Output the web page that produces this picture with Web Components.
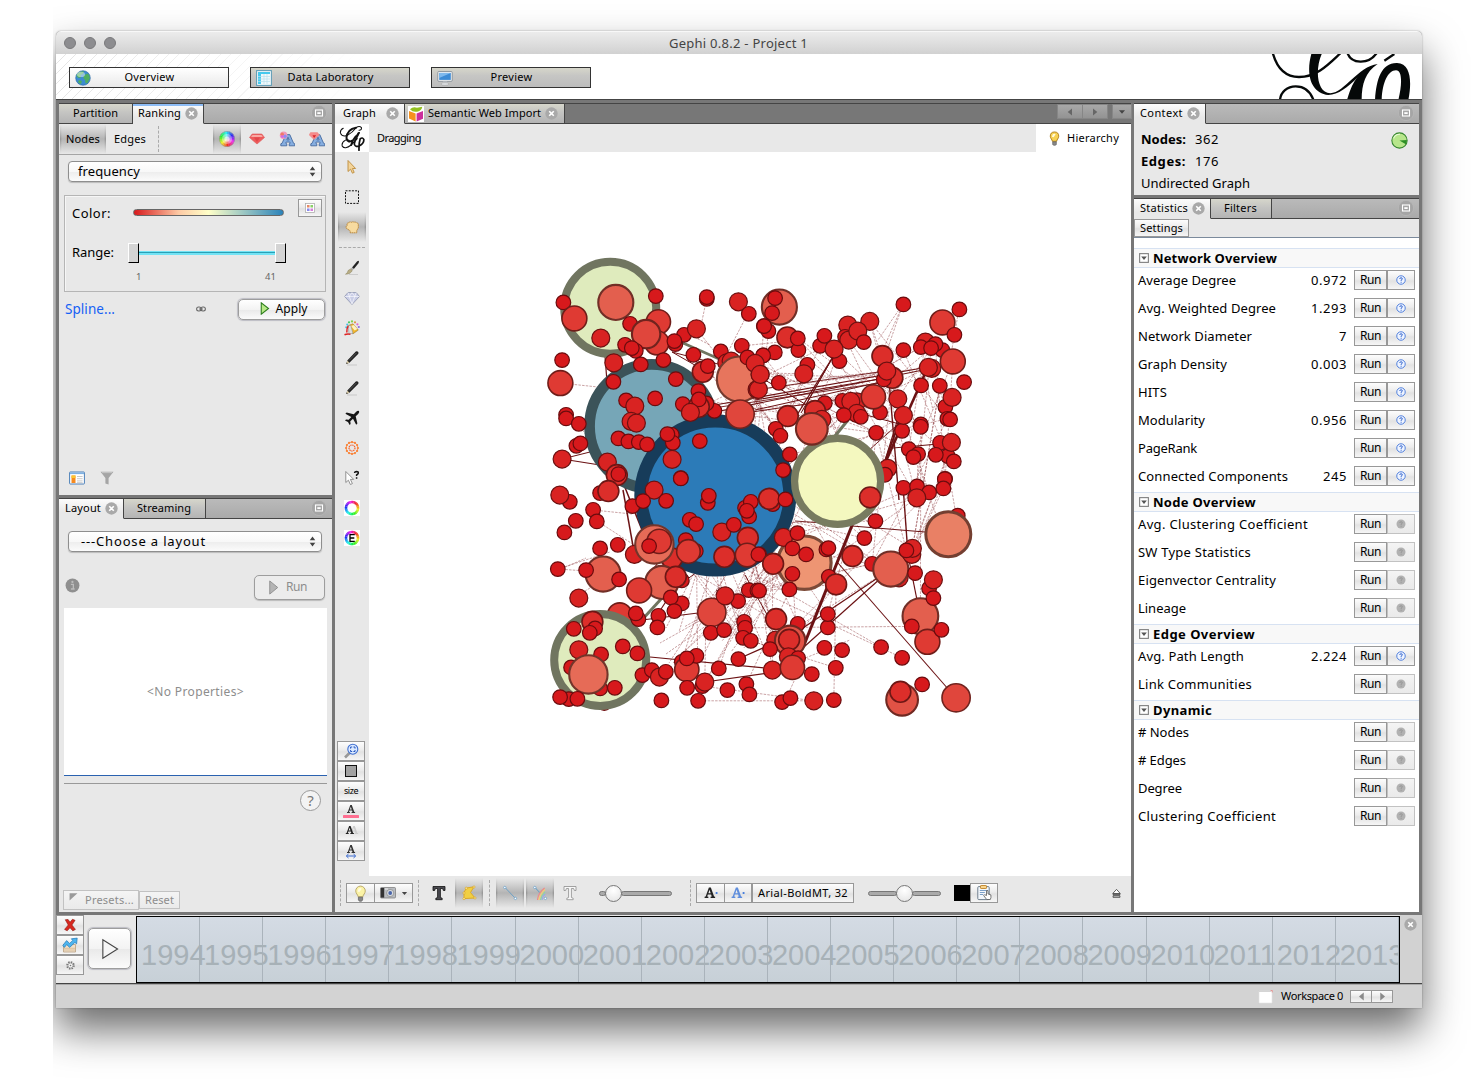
<!DOCTYPE html>
<html lang="en">
<head>
<meta charset="utf-8">
<title>Gephi 0.8.2 - Project 1</title>
<style>
body{margin:0;background:#fff;font-family:"Noto Sans","Open Sans",sans-serif;font-size:11px;color:#000;overflow:hidden}
</style>
</head>
<body>
<gephi-app></gephi-app>
<script>
const define=(name,css,html,setup)=>{
  customElements.define(name,class extends HTMLElement{
    connectedCallback(){
      if(this.shadowRoot)return;
      const root=this.attachShadow({mode:"open"});
      const t=document.createElement("template");
      t.innerHTML=`<style>*{box-sizing:border-box}:host{box-sizing:border-box}${css}</style>`+(typeof html==="function"?html(this):html);
      root.appendChild(t.content.cloneNode(true));
      if(setup)setup(this,root);
    }
  });
};

/* ---------- icons (16 x 16 grid) ---------- */
const wheel=(r,w)=>{let s="";for(let i=0;i<24;i++){const a=i*15*Math.PI/180,b=(i+1.1)*15*Math.PI/180;
  s+=`<path d="M${8+r*Math.cos(a)} ${8+r*Math.sin(a)}A${r} ${r} 0 0 1 ${8+r*Math.cos(b)} ${8+r*Math.sin(b)}" fill="none" stroke="hsl(${(i*15+285)%360},88%,56%)" stroke-width="${w}"/>`}return s};
const wheelCW=(r,w)=>{let s="";for(let i=0;i<24;i++){const a=i*15*Math.PI/180,b=(i+1.1)*15*Math.PI/180;
  s+=`<path d="M${8+r*Math.cos(a)} ${8+r*Math.sin(a)}A${r} ${r} 0 0 1 ${8+r*Math.cos(b)} ${8+r*Math.sin(b)}" fill="none" stroke="hsl(${(i*15+55)%360},88%,54%)" stroke-width="${w}"/>`}return s};
const dots=(()=>{let s="";for(let i=0;i<12;i++){const a=i*Math.PI/6;s+=`<circle cx="${8+5.9*Math.cos(a)}" cy="${8+5.9*Math.sin(a)}" r="1.1"/>`}return s})();
const letterT=(f,s)=>`<path d="M2 1.5h12v4h-1.6l-.8-2H9.4v9l1.8.8v1.4H4.8v-1.4l1.8-.8v-9H4.4l-.8 2H2z" fill="${f}" stroke="${s}" stroke-width=".8"/>`;
const letterA=(f,s,x=0)=>`<path transform="translate(${x} 0)" d="M1.2 14.8v-2l1.2-.5L6.4 3.600h3.800l3.800 8.700 1.200.5v2H9.600v-2l1-.5-.4-1.200H6.600l-.4 1.200 1 .5v2zM7.300 8.900h2.200L8.400 6.200z" fill="${f}" stroke="${s}" stroke-width=".8"/>`;
const smallA=(f,y=0)=>`<path transform="translate(0 ${y})" d="M4 11v-.9l.8-.2L7.300 3h1.500l2.500 6.900.8.2v.9H8.600v-.9l.9-.2-.5-1.500H6.500L6 9.900l.9.2v.9zM6.900 7.400h1.800L7.800 4.700z" fill="${f}"/>`;
const pencil=`<path d="M3 15h10" stroke="#c8c8c8"/><path d="M2.3 14l1-3.6L11.8 1.6q1.5-.8 2.4.4.8 1-.1 2L5.4 12.8z" fill="#222"/><path d="M2.3 14l1-3.6 2.1 2.3z" fill="#d8c9a4"/><path d="M2.3 14l.5-1.6.9.9z" fill="#222"/><path d="M5 10.5l7.5-7.6" stroke="#777" stroke-width=".6"/>`;
const bulb=`<path d="M8 1a4.6 4.6 0 0 0-4.5 4.6c0 2.4 2 3.3 2.2 5.4h4.6c.2-2.1 2.2-3 2.2-5.4A4.6 4.6 0 0 0 8 1z" fill="var(--bulb,#f7d154)" stroke="var(--bulbline,#a6730c)" stroke-width=".9"/><path d="M6.2 3.4q1.8-1 3 .1L7 6.6 5.2 6z" fill="#fffbe0"/><path d="M6 11.5h4v2.6l-1 1.2H7l-1-1.2z" fill="#888" stroke="#444" stroke-width=".5"/>`;
const ICONS={
 close:`<circle cx="8" cy="8" r="7.6" fill="#a9a9a9"/><path d="M5.2 5.2l5.6 5.6M10.8 5.2l-5.6 5.6" stroke="#fff" stroke-width="2"/>`,
 min:`<circle cx="8" cy="8" r="7.6" fill="#a5a5a5" stroke="#b9b9b9" stroke-width=".7"/><rect x="4.5" y="5" width="7" height="6" fill="none" stroke="#fff" stroke-width="1.1"/><rect x="6.3" y="7.2" width="3.4" height="1.800" fill="#fff"/>`,
 globe:`<circle cx="8" cy="8" r="7.3" fill="#3c8bd0" stroke="#2566a5" stroke-width=".6"/><path d="M2 4q3-3.5 7-2.6L8 4 5.5 5 6 7.5 3.4 8 1.5 6zM9 5l4-1.5q2 2 1.8 5L12.5 13l-2 .5-.5-3.5L8.3 8zM4 10l3 1-1 3q-2-.6-3-2z" fill="#4fae62"/><ellipse cx="6" cy="4.400" rx="4" ry="2.600" fill="#fff" opacity=".45"/>`,
 table:`<rect x=".6" y=".6" width="14.8" height="14.8" fill="#eef8fb" stroke="#5c9bb4"/><path d="M2 2h12v2H2zM2 4h3v10H2z" fill="#45c9ee"/><path d="M5 6.5h9M5 9h9M5 11.5h9M8 4v10M11 4v10M2 6.5h3M2 9h3M2 11.5h3" stroke="#b7dfec" stroke-width=".7"/>`,
 monitor:`<rect x=".8" y="1.5" width="14.4" height="9.8" rx="1" fill="#f1f3f4" stroke="#7d8890" stroke-width=".8"/><rect x="2.2" y="2.9" width="11.6" height="7" fill="#3d8bd5"/><path d="M2.2 2.9h11.6L2.2 8z" fill="#7fb9ed"/><path d="M6 11.5h4l1 2.5H5z" fill="#c7ccd0"/><ellipse cx="8" cy="14" rx="4" ry="1.2" fill="#e5e7e9" stroke="#888" stroke-width=".4"/>`,
 wheel:`${wheel(4,7.600)}<circle cx="8" cy="8" r="5" fill="#fff" opacity=".4"/><circle cx="8" cy="8" r="2.6" fill="#fff" opacity=".6"/><circle cx="8" cy="8" r="7.6" fill="none" stroke="#999" stroke-width=".6"/>`,
 ruby:`<path d="M3.2 3h9.6L15.5 6.5 8 13 .5 6.5z" fill="#ee5b5b" stroke="#d66" stroke-width=".7"/><path d="M3.5 4h9l1.3 2H2z" fill="#f9a9a3"/><path d="M5 6.500h6L8 11z" fill="#e2474a"/>`,
 colorA:`${letterA("#86aee0","#3a5f98",.6)}<circle cx="4.600" cy="4.200" r="3.800" fill="#f29ab9"/><circle cx="3.2" cy="3.2" r="1.7" fill="#ef7b66"/><circle cx="6" cy="5.2" r="1.7" fill="#8d8cf4"/><circle cx="3.2" cy="5.6" r="1.4" fill="#d568e5"/>`,
 sizeA:`${letterA("#86aee0","#3a5f98",.6)}<path d="M1.5 1.500h7L10.400 4 5 8.600.2 4z" fill="#f58a8a" stroke="#e88" stroke-width=".5"/><path d="M3.5 4.200h3.600L5.100 7z" fill="#d92127"/>`,
 swatches:`<rect x="2" y="2" width="12" height="12" fill="#fff" stroke="#aaa"/><path d="M4 4h3.4v3.4H4z" fill="#e58a65"/><path d="M8.6 4H12v3.4H8.6z" fill="#8bd06a"/><path d="M4 8.6h3.4V12H4z" fill="#8a89ef"/><path d="M8.6 8.6H12V12H8.6z" fill="#d57edb"/>`,
 chain:`<g fill="none" stroke="#666" stroke-width="1.7"><rect x="1" y="4.8" width="7.2" height="6.4" rx="3.200"/><rect x="7.800" y="4.800" width="7.200" height="6.400" rx="3.200"/><path d="M5 8h6"/></g>`,
 play:`<path d="M4 1v14L13 8z" fill="#b8e986" stroke="#2c7d1c" stroke-width="1.300"/>`,
 playOff:`<path d="M4 1v14L12.500 8z" fill="#b4b4b4" stroke="#8f8f8f" stroke-width="1"/>`,
 list:`<rect x=".6" y="2" width="14.8" height="12" rx=".6" fill="#fff" stroke="#4b7fb8"/><path d="M1 2.5h14v1.6H1z" fill="#7eb1e2"/><path d="M2.500 5.500h4v7.500h-4z" fill="#f68a1f"/><path d="M2.500 5.500h4v2.500h-4z" fill="#fbc62f"/><path d="M8 6.5h5.6M8 8.7h5.6M8 10.9h5.6M8 12.7h5.6" stroke="#bbb" stroke-width=".8"/>`,
 funnel:`<path d="M1.5 1.8h13L9.6 8v6.5l-3.2-1V8z" fill="#a5a5a5"/><path d="M3 2.6h10" stroke="#c5c5c5"/>`,
 info:`<circle cx="8" cy="8" r="7.4" fill="#8f8f8f"/><path d="M6.3 6.8h2.6v4.7h1M6.3 11.7h4" stroke="#bdbdbd" stroke-width="1.4" fill="none"/><circle cx="7.9" cy="4.2" r="1.2" fill="#bdbdbd"/>`,
 tri:`<path d="M1 2h14L1 15z" fill="#9a9a9a"/>`,
 cube:`<rect width="16" height="16" fill="#fff"/><path d="M1 5l6.6 2.6v8L1 12.6z" fill="#f5911e"/><path d="M8.6 7.6L15 5v7.8l-6.4 2.8z" fill="#cc2e9d"/><path d="M2 3.2q3-2.8 7-1.4l5.3-1q-.6 3.6-4.3 4.6Q5 6.7 2 3.2z" fill="#93c020"/>`,
 arrow:`<path d="M4 1.500v11l2.600-2.300 1.800 4 1.800-.8-1.800-3.900h3.200z" fill="#f3d49a" stroke="#bd8c3c" stroke-width=".9"/>`,
 marquee:`<rect x="1.5" y="1.8" width="13" height="12.6" fill="none" stroke="#111" stroke-width="1" stroke-dasharray="2 1.2"/>`,
 hand:`<path d="M3.200 6.500Q2.500 3.800 4.800 3.700 6 2.300 7.300 3.300 8.800 2.300 10 3.300 11.800 2.400 12.500 4 14.600 3.700 14.300 6v2.800l-1.500 2.800v2.200H6.200v-1.900L2.300 9.200Q1.600 7.300 3.200 6.500z" fill="#f7dba0" stroke="#b98332" stroke-width=".9" stroke-dasharray="1.600 .5"/>`,
 brush:`<path d="M5 14.5h9" stroke="#ccc"/><path d="M15 .8l-1.8.4L8 7.5l1.8 1.6L14.7 3z" fill="#222"/><path d="M8 7.5l1.8 1.6-1.6 1.4-1.7-1.5z" fill="#aaa"/><path d="M6.5 9l1.7 1.5Q7 14 1.5 14.2 4.3 12.5 4 10.6z" fill="#b9ae85" stroke="#8b835f" stroke-width=".5"/>`,
 diamond:`<path d="M4 2.5h8.2L15.5 6.5 8 14.5.6 6.5z" fill="#c9cde6" stroke="#8f95b0" stroke-width=".8"/><path d="M.8 6.5h14.6M4 2.5l1.3 4L8 14l2.8-7.5 1.4-4M5.3 6.5L8 2.6l2.8 3.9" fill="none" stroke="#fff" stroke-width=".6"/>`,
 bucket:`<g fill="#44c1e8"><circle cx="2.2" cy="7.3" r="1"/><circle cx="3.2" cy="4.6" r="1"/></g><circle cx="5" cy="2.3" r="1.1" fill="#46c860"/><circle cx="8" cy="1.4" r="1.1" fill="#7fd44f"/><circle cx="11" cy="2.3" r="1.1" fill="#e2953d"/><circle cx="13.4" cy="4.3" r="1.1" fill="#e267cd"/><circle cx="14.8" cy="7" r="1.1" fill="#8669e3"/><path d="M4 5.5l5-1.7 5.3 6.3-5.5 3.8z" fill="#f1b62d" stroke="#8f6a20" stroke-width=".5"/><path d="M7 6l3-1 3.3 4-2.6 1.500z" fill="#fff1c0"/><path d="M4 5.500h2.800L9 13.500H5z" fill="#ddd" stroke="#888" stroke-width=".5"/><path d="M4.200 6Q2.600 8 2.800 12.500M.5 14.800q3-1.400 6-.4" stroke="#d22" stroke-width="1.500" fill="none"/>`,
 pencil,
 plane:`<path d="M15 1q-1.3-.7-2.8.8L9.8 4.3 2.6 2.6 1.4 3.8 7.3 7 4.7 9.8 2 9.4 1 10.4l3 1.5L5.6 15l1-1-.3-2.7L9 8.7l3.2 6 1.2-1.2-1.7-7.2 2.5-2.4Q15.8 2.3 15 1z" fill="#151515"/>`,
 sun:`<g fill="#f98338">${dots}</g><circle cx="8" cy="8" r="3" fill="none" stroke="#f5602b" stroke-width="1.2" stroke-dasharray="1.4 .6"/><circle cx="8" cy="8" r="5.9" fill="none" stroke="#f98338" stroke-width=".8"/>`,
 helpCursor:`<path d="M1.8 1.5v11l2.6-2.3 2 4.3 2-.9-2-4.2h3.3z" fill="#fff" stroke="#888" stroke-width=".9"/><path d="M10.5 3q.2-1.6 2-1.6 2 .1 1.8 1.8-.1 1-1.7 1.8v1M12.6 7.2v1.5" fill="none" stroke="#111" stroke-width="1.5"/>`,
 ring:`<rect width="16" height="16" fill="#fff"/>${wheelCW(6,2.6)}`,
 ringE:`<rect width="16" height="16" fill="#fff"/>${wheelCW(6,2.6)}<path d="M10.800 4.700H6v6.600h4.800M6 8h4.300" fill="none" stroke="#000" stroke-width="1.300"/>`,
 mag:`<path d="M7 9.5L2 14.5" stroke="#999" stroke-width="2.6"/><circle cx="9.8" cy="6.2" r="5" fill="#dceaff" stroke="#3f6fd1" stroke-width="1.1"/><path d="M7.6 5.6V4h1.6M10.4 4H12v1.6M12 7v1.5h-1.6M9.2 8.5H7.6V7" fill="none" stroke="#2456c0" stroke-width="1"/>`,
 square:`<rect x="2.500" y="2.500" width="11" height="11" fill="#a2a2a2" stroke="#111"/>`,
 Apink:`${smallA("#333",-1)}<rect y="12" width="16" height="3" rx=".6" fill="#ff6f91"/>`,
 Ashade:`<g transform="translate(3 0)">${smallA("#ccc")}</g><g transform="translate(-1.2 0)">${smallA("#222")}</g>`,
 Awidth:`${smallA("#333",-1)}<path d="M3.6 13h8.8M5.5 11l-2.2 2 2.2 2M10.5 11l2.2 2-2.2 2" fill="none" stroke="#3a6bd0" stroke-width="1"/>`,
 bulb,
 camera:`<rect x=".5" y="2.5" width="15" height="10.5" rx="1" fill="#b9bcc0" stroke="#777" stroke-width=".7"/><rect x=".8" y="3" width="3.4" height="9.6" fill="#333"/><circle cx="10.2" cy="8" r="3.6" fill="#d9dde0" stroke="#777" stroke-width=".6"/><circle cx="10.2" cy="8" r="1.9" fill="#4964a8"/><path d="M5 4h3" stroke="#eee"/>`,
 down:`<path d="M2 4.500h12l-6 7z" fill="#444"/>`,
 left:`<path d="M12 1v14L3.500 8z" fill="currentColor"/>`,
 right:`<path d="M4 1v14l8.500-7z" fill="currentColor"/>`,
 T:letterT("#4a4a50","#111"),
 Tout:letterT("#f8f8f8","#8d8d8d"),
 hull:`<path d="M3 7.500L5.400 3 13 1.800 9.500 7.500 14 13 3 13.600z" fill="#f1cf43" stroke="#dcaa2a"/><g fill="#fff3a8" stroke="#d39e21" stroke-width=".6"><circle cx="5.2" cy="3.2" r="1.1"/><circle cx="13" cy="2" r="1.1"/><circle cx="3" cy="8" r="1.1"/><circle cx="3" cy="13.6" r="1.1"/><circle cx="14" cy="13" r="1.1"/></g>`,
 edge:`<path d="M3 2.500L13.500 13.500" stroke="#6da1c5" stroke-width="1"/><circle cx="2.8" cy="2.5" r="1.2" fill="#fff" stroke="#5c98c5" stroke-width=".7"/><circle cx="13.4" cy="13.4" r="1.2" fill="#fff" stroke="#5c98c5" stroke-width=".7"/>`,
 rainbow:`<path d="M3 2.5L8 8" stroke="#6da1c5" stroke-width="1.1"/><circle cx="2.8" cy="2.5" r="1.2" fill="#fff" stroke="#5c98c5" stroke-width=".7"/><g fill="none" stroke-width="1.3"><path d="M5.5 15Q6 8 12.6 3" stroke="#ee8a8a"/><path d="M7 15Q8 9 13 4.6" stroke="#f2cf72"/><path d="M8.5 15Q9.5 10 13 7" stroke="#91d4a0"/><path d="M10 15q.6-4 3-6" stroke="#9aa8ea"/></g><circle cx="13.4" cy="13.4" r="1.2" fill="#fff" stroke="#5c98c5" stroke-width=".7"/>`,
 Adot:`<g transform="translate(-3.600 -1.300) scale(1.300)">${smallA("#222")}</g><circle cx="13.600" cy="8" r="1.100" fill="#3d78dc"/>`,
 Ablue:`<g transform="translate(-3.600 -1.300) scale(1.300)">${smallA("#5f8edd")}</g><circle cx="13.600" cy="8" r="1.100" fill="#3d78dc"/>`,
 clip:`<rect x="1.8" y="1.6" width="11.4" height="13" rx="1" fill="#f4f8fc" stroke="#6e7e8d"/><rect x="4.5" y=".5" width="6" height="3" rx=".6" fill="#f8d48d" stroke="#c08327" stroke-width=".9"/><path d="M3.8 5.5h7M3.8 7.5h5M3.8 9.5h3.5" stroke="#7da0c8"/><path d="M10.5 5.5v5l-2-.8-.8.9 3 3.9h3.6q1-1.5.6-4.6l-2.9-1V5.6z" fill="#fff" stroke="#555" stroke-width=".8"/>`,
 eject:`<path d="M8 2L2.5 8h11zM3 9.2h10v1.2H3zM3 11.6h10v2H3z" fill="#fff" stroke="#333" stroke-width="1.1"/>`,
 redx:`<path d="M2.6 2l3.2-.3L8 4.9l2.8-3.4 3 1.2L10.2 8l4 5-3 1.7L8 11l-3.2 3.6-3-1.6L6 8z" fill="#d8281f" stroke="#8e1710" stroke-width=".7"/>`,
 chart:`<path d="M1.5 7.5h12V15h-12z" fill="#f0dfc8" stroke="#b99f80" stroke-width=".8"/><path d="M2 11.3h11M2 13h11" stroke="#d5b992" stroke-width=".8"/><path d="M.8 8.4L4.6 3.6 7.6 6.4l3.2-3L9.3 1.8l5.9-.7-.6 5.8-1.7-1.5-5.2 5-3-2.8-2.3 2.8z" fill="#4db5ef" stroke="#2477b5" stroke-width=".7"/>`,
 gear:`<circle cx="8" cy="8" r="5" fill="none" stroke="#777" stroke-width="2.4" stroke-dasharray="2.2 1.7"/><circle cx="8" cy="8" r="3.6" fill="#f4f4f4" stroke="#888"/><circle cx="8" cy="8" r="1.2" fill="#777"/>`,
 bigplay:`<path d="M2.800 1.300v13.400L13.500 8z" fill="#f6f6f6" stroke="#444" stroke-width=".8"/>`,
 help:`<circle cx="8" cy="8" r="6.8" fill="#eef4ff" stroke="#4a7bdc" stroke-width="1.5"/><path d="M5.9 6.4q.2-2 2.2-2 2.2.1 2 1.9-.2 1.2-1.9 1.9v1.2M8.2 10.8v1.6" fill="none" stroke="#3465cf" stroke-width="1.6"/>`,
 helpOff:`<circle cx="8" cy="8" r="7.2" fill="#b1b1b1"/><path d="M5.9 6.4q.2-2 2.2-2 2.2.1 2 1.9-.2 1.2-1.9 1.9v1.2M8.2 10.8v1.6" fill="none" stroke="#929292" stroke-width="1.4"/>`,
 twisty:`<rect x="1" y="1" width="14" height="14" fill="#fff" stroke="#808080" stroke-width="1.8"/><path d="M3.500 5.500h9L8 11z" fill="#555"/>`,
 pie:`<circle cx="8" cy="8" r="7.2" fill="#b7e68b" stroke="#36862f"/><path d="M8 8l6.9-.4a7 7 0 0 1-1 4z" fill="#2c8f26"/><path d="M2.5 6Q4 2 8.5 2.2" stroke="#e9fbd7" fill="none"/>`,
 page:`<path d="M1 2h14v13H1z" fill="#fff" stroke="#ddd" stroke-width=".6"/><path d="M1 2.5h13" stroke="#ccc"/><path d="M13.5 1.6h1.7v2" fill="none" stroke="#e59090"/>`,
 spin:`<path d="M8 .8l4 5.400H4zM8 15.200L4 9.800h8z" fill="#444"/>`,
 logo:`<g fill="none" stroke="#111" stroke-linecap="round"><path stroke-width=".65" d="M2.600 2Q.6 3 .9 5 2 7.500 5 6.500 8.500 4.500 10.500 1.700 12.500.2 13.800 1.600 14 3.300 12.300 3.200M6.800 10.300Q6 8.600 4 9.300 1.400 10.700 2 13 3.600 15.300 7.500 12.300 10.500 9.500 12.600 4.600"/><path stroke-width="1.200" d="M10.500 1.700Q5 2.600 4.600 8 5.200 11.400 8.500 9.400 10.500 8 12 5M10.300 7Q8.200 9.300 7.500 12.300"/><path stroke-width="1.050" d="M11 8.300Q9.200 9.800 9.500 12 10.300 13.900 12.600 12.800 15.300 11.300 15.300 9 14.500 7.200 13 8.600 12.200 11 12.300 15.600"/></g>`
};
define("g-icon",`:host{display:inline-block;flex:none;line-height:0}svg{display:block}`,
 h=>{const s=h.getAttribute("s")||16;return `<svg width="${s}" height="${s}" viewBox="0 0 16 16">${ICONS[h.getAttribute("n")]}</svg>`});

/* text run tracked to a given advance width */
define("t-x",`:host{display:inline-block;white-space:pre;flex:none}:host([up]){padding-bottom:2px}`,`<slot></slot>`,h=>{
  const w=+h.getAttribute("w"),n=h.textContent.length;
  if(w&&n){const cur=h.getBoundingClientRect().width;h.style.letterSpacing=((w-cur)/n)+"px"}
});

define("push-button",`:host{display:flex;align-items:center;justify-content:center;flex:none;border:1px solid #989898;background:linear-gradient(#fdfdfd,#ececec 45%,#e2e2e2 55%,#f6f6f6)}
:host([off]){border-color:#c2c2c2;color:#8d8d8d;background:linear-gradient(#f4f4f4,#eaeaea)}
:host([round]){border-radius:5px;border-color:#9d9d9d;background:linear-gradient(#fff,#f3f3f3 50%,#e9e9e9 51%,#fbfbfb);box-shadow:0 0 1px 1px #bcbcc4}
:host([round][off]){background:#ececec;box-shadow:0 1px 1px #bbb}`,`<slot></slot>`);

define("combo-box",`:host{display:flex;align-items:center;justify-content:space-between;height:21px;padding:0 3px 0 9px;font-size:13px;border:1px solid #8e8e8e;border-radius:4px;background:linear-gradient(#fff,#f8f8f8 50%,#ededed 52%,#fbfbfb);box-shadow:0 1px 1px #bbb}`,
 `<slot></slot><g-icon n="spin" s="11"></g-icon>`);

define("slider-bar",`:host{display:flex;align-items:center;flex:none;height:20px}
.t{height:5px;border-radius:3px;background:#aaa;border:1px solid #777}
.k{width:17px;height:17px;border-radius:50%;border:1px solid #777;background:radial-gradient(circle at 50% 30%,#fff,#e2e2e2);margin:0 -1px;flex:none}`,
 h=>`<span class="t" style="width:${h.getAttribute("a")}px"></span><span class="k"></span><span class="t" style="flex:1"></span>`);

define("dock-tab",`:host{display:flex;align-items:center;height:20px;flex:none;padding-left:6px;border-right:1px solid #444;border-bottom:1px solid #444;background:linear-gradient(#d6d6cb,#c4c4c2 45%,#b4b4b4);font-size:11px}
:host([on]){background:linear-gradient(#fcfcfc,#e8e8e8 70%);border-bottom-color:#e8e8e8}
:host([hot]){box-shadow:inset 0 2px #8dbcf5}
g-icon{margin:-1px 0 0 4px}`,h=>`<slot></slot>${h.hasAttribute("x")?`<g-icon n="close" s="13"></g-icon>`:""}`);

define("dock-panel",`:host{display:flex;flex-direction:column;background:#e8e8e8}
.bar{display:flex;height:21px;flex:none;border-top:1px solid #444;background:linear-gradient(#bababa,#a9a9a9)}
:host([plain]) .bar{background:#777}
.rest{flex:1;border-bottom:1px solid #444;display:flex;justify-content:flex-end;align-items:center;padding-right:5px}
.rest g-icon{margin-top:-2px}
:host([plain]) .rest{padding-right:0}
.body{flex:1;display:flex;flex-direction:column;min-height:0}`,
 h=>`<div class="bar"><slot name="tab"></slot><div class="rest"><slot name="end"><g-icon n="min" s="16"></g-icon></slot></div></div><div class="body"><slot></slot></div>`);

define("tool-toggle",`:host{display:flex;align-items:center;justify-content:center;flex:none;width:30px;height:30px}
:host([on]){background:linear-gradient(90deg,#e8e8e8 1px,transparent 1px,transparent calc(100% - 1px),#e8e8e8 0),linear-gradient(rgba(232,232,232,1),rgba(232,232,232,0) 50%,rgba(232,232,232,1)),linear-gradient(90deg,#7a7a7a,#b4b4b4 3px,#b4b4b4 calc(100% - 3px),#7a7a7a)}`,`<slot></slot>`);

/* ---------- ranking ---------- */
define("ranking-view",`:host{display:flex;flex-direction:column;flex:1}
.tb{display:flex;height:31px;border-bottom:1px solid #a5a5a5;align-items:center}
.sep{height:26px;border-left:1px dashed #aaa}
combo-box{margin:6px 10px 0 9px}
.box{margin:13px 6px 0 5px;height:97px;border:1px solid #b5b5b5;box-shadow:inset 1px 1px #f6f6f6;padding:3px 3px 0 7px;font-size:13px}
.row{display:flex;align-items:center;height:22px}
.grad{width:151px;height:7px;border:1px solid #666;border-radius:4px;background:linear-gradient(90deg,#d7191c,#fdcaa5 30%,#ffffc8 50%,#abd0c4 70%,#2b83ba);margin-left:22px}
.line{width:136px;height:4px;background:linear-gradient(#72e3f5 25%,#2c9fb5 25%,#2c9fb5 50%,#72e3f5 50%)}
.k{width:11px;height:20px;background:#d4d4d4;border:1px solid #fff;border-right-color:#000;border-bottom-color:#000}
.n{display:flex;justify-content:space-between;color:#666;font-size:9.500px;margin:6px 46px 0 63px;line-height:14px}
.act{display:flex;align-items:center;margin:6px 7px 0 6px;height:22px}
.foot{display:flex;gap:14px;margin:auto 0 9px 10px}`,
`<div class="tb"><tool-toggle on style="width:48px"><t-x up w="34">Nodes</t-x></tool-toggle><t-x up w="32" style="margin:0 12px 0 7px">Edges</t-x><span class="sep"></span><tool-toggle on style="margin-left:53px"><g-icon n="wheel"></g-icon></tool-toggle><tool-toggle><g-icon n="ruby"></g-icon></tool-toggle><tool-toggle><g-icon n="colorA"></g-icon></tool-toggle><tool-toggle><g-icon n="sizeA"></g-icon></tool-toggle></div>
<combo-box><t-x up w="62">frequency</t-x></combo-box>
<div class="box"><div class="row"><t-x w="39" style="margin-top:5px">Color:</t-x><span class="grad" style="margin-top:5px"></span><push-button style="width:24px;height:18px;margin-left:14px;align-self:flex-start"><g-icon n="swatches" s="12"></g-icon></push-button></div>
<div class="row" style="margin-top:21px"><t-x up w="42">Range:</t-x><span class="k" style="margin:0 0 0 14px"></span><span class="line"></span><span class="k"></span></div>
<div class="n"><span style="margin-left:1px">1</span><t-x w="11">41</t-x></div></div>
<div class="act"><t-x w="50" style="color:#1560f5;font-size:13.500px">Spline...</t-x><g-icon n="chain" s="10" style="margin-left:81px"></g-icon><push-button round style="width:87px;height:21px;margin-left:auto;font-size:12px"><g-icon n="play" s="13" style="margin:-1px 5px 0 2px"></g-icon><t-x up w="32">Apply</t-x></push-button></div>
<div class="foot"><g-icon n="list"></g-icon><g-icon n="funnel"></g-icon></div>`);

/* ---------- layout ---------- */
define("layout-view",`:host{display:flex;flex-direction:column;flex:1;color:#8d8d8d}
combo-box{margin:12px 10px 0 9px;color:#000;padding-left:12px}
.run{display:flex;justify-content:space-between;align-items:center;margin:22px 7px 0 6px;height:26px}
.run>g-icon{margin-top:-4px}
.props{margin:8px 5px 0 5px;height:168px;background:#fff;border-bottom:1px solid #2a62b0;display:flex;align-items:center;justify-content:center;font-size:12px}
.hr{margin:7px 5px 0 5px;height:1px;background:#999}
.q{width:21px;height:21px;border:1px solid #999;border-radius:50%;background:#f3f3f3;margin:6px 11px 0 auto;display:flex;align-items:center;justify-content:center;font-size:15px;color:#777}
.foot{display:flex;margin:auto 0 2px 4px;gap:0;align-items:center}`,
`<combo-box><t-x up w="125">---Choose a layout</t-x></combo-box>
<div class="run"><g-icon n="info" s="15"></g-icon><push-button round off style="width:71px;height:25px;font-size:12px"><g-icon n="playOff" s="15" style="margin:0 5px 0 -6px"></g-icon><t-x up w="21">Run</t-x></push-button></div>
<div class="props"><t-x w="97">&lt;No Properties&gt;</t-x></div><div class="hr"></div><div class="q"><t-x up>?</t-x></div>
<div class="foot"><push-button off style="width:76px;height:20px;justify-content:flex-start;padding-left:5px"><g-icon n="tri" s="9" style="margin:-8px 7px 0 0"></g-icon><t-x up w="49">Presets...</t-x></push-button><push-button off style="width:41px;height:18px"><t-x up w="29">Reset</t-x></push-button></div>`);

/* ---------- graph ---------- */
const TILES=[
 {x:545,y:250,n:"212,157,55 55,157,23 88,205,39 332,138,23 255,221,23 340,215,38 335,278,38 303,252,45 167,264,28 240,284,23 272,302,23 260,294,23 391,282,23 417,254,23 388,273,23 454,236,28 485,146,23 485,141,23 580,155,28 611,191,23 656,228,23 445,314,23 527,304,23 545,338,28 558,333,28 51,330,23 46,399,39 206,338,28 205,395,23 287,343,23 355,330,23 473,365,33 488,348,23 583,387,70 590,287,23 607,322,23 655,316,23 636,418,28 645,373,28 508,482,23 585,492,44 392,387,23 330,445,23 243,451,23 269,468,28 258,514,28 274,519,28 63,494,23 63,505,23 101,521,23 94,587,23 106,580,23 51,627,28 413,462,23 484,460,23 460,423,23 461,470,33 461,448,23 436,487,28 220,565,23 250,574,23 281,576,23 306,583,23 380,554,23 383,578,23 367,552,23 464,573,23 381,628,28 187,636,28 215,675,33 220,672,23 407,684,23"},
 {x:755,y:250,n:"73,171,55 60,144,23 51,189,23 445,163,23 562,217,39 613,178,23 598,254,23 40,243,23 27,228,23 97,262,33 130,300,23 128,265,23 195,287,23 208,257,23 278,225,28 344,214,28 270,260,23 281,270,28 308,243,28 326,276,23 253,333,23 237,297,28 59,307,23 24,316,23 0,340,28 10,418,28 15,373,28 71,398,23 157,344,23 146,371,28 382,318,33 445,300,23 511,276,28 497,291,23 562,300,23 541,282,23 528,294,23 530,355,28 520,352,28 593,334,39 627,396,23 412,383,33 386,388,23 395,363,28 498,406,23 554,407,23 571,470,23 591,442,28 577,506,23 585,508,23 209,459,23 180,483,33 200,508,28 98,498,33 62,536,23 76,557,23 170,536,50 262,452,23 305,455,28 287,454,28 305,490,28 266,495,23 317,500,23 375,487,23 355,440,38 428,446,28 441,542,23 445,496,28 363,548,23 497,523,23 497,530,23 104,613,23 84,660,23 555,578,23 578,618,23 589,577,28 461,597,23 489,612,23 475,621,23 542,614,23 596,634,23 570,686,23"},
 {x:545,y:475,n:"165,54,23 190,48,33 74,80,23 44,60,28 144,104,23 92,137,23 155,139,23 58,172,23 165,220,23 218,209,23 38,282,23 174,297,55 123,285,23 222,313,23 101,369,28 262,93,23 268,238,28 380,250,33 328,208,60 342,199,38 312,213,23 327,45,28 294,78,23 363,77,23 407,10,23 488,83,23 491,62,23 600,98,23 617,80,23 612,124,23 605,107,23 434,134,23 453,147,23 530,171,28 566,149,23 422,195,23 452,228,23 430,229,37 608,188,33 642,238,23 538,245,33 606,240,37 350,322,52 410,316,23 392,305,33 282,346,39 410,385,23 377,367,23 388,408,23 340,422,23 337,457,23 280,432,23 272,415,23 500,412,44 579,378,23 540,362,28 611,345,23 637,346,23 497,473,23 537,465,23 597,440,23 600,458,23 594,488,23 617,497,23 142,440,33 86,461,23 150,460,23 134,473,23 101,524,28 168,538,23 233,514,23 277,535,23 78,577,23 165,640,23 130,598,60 209,638,23 71,672,23 45,666,23 97,671,23 292,600,23 320,585,23 343,606,28 362,590,23 410,560,23 425,583,38 454,542,23 425,550,23 426,638,23 472,633,23 479,621,28 521,580,23 580,552,23 547,645,23 459,677,23 349,676,23 604,627,23 613,658,23"},
 {x:755,y:475,n:"345,67,33 53,87,23 42,71,33 91,73,23 445,38,23 486,34,23 522,52,23 485,68,28 569,12,23 565,40,23 361,138,23 328,189,23 85,187,28 127,174,23 112,220,23 153,238,23 112,296,23 103,343,23 12,347,23 10,238,23 54,266,33 214,223,23 220,219,23 292,243,33 221,305,23 243,328,33 351,266,23 432,308,28 407,282,55 470,238,28 472,220,28 454,226,23 480,294,23 522,340,23 535,314,28 496,423,56 535,369,23 470,454,23 517,500,39 559,464,23 218,457,23 218,417,23 128,446,23 63,432,33 62,495,28 105,497,48 102,494,33 45,522,23 208,518,23 261,525,23 378,516,23 441,548,23 242,578,23 100,545,28 129,549,23 52,585,28 112,577,38 170,597,23 81,681,23 106,669,23 176,677,28 236,675,23 441,674,50 436,650,33 501,628,23 603,668,44"}];
/* drawn before the large hubs: x y r in page units */
const BEHIND=[[619.7,615,12.7],[604.3,703,7.7],[887.7,468.3,9.3],[885,474.7,7.7],[957.7,515.7,7.7]];
/* large hubs: x y r ring fill ringColour */
const HUBS=[[610.200,307.800,50,8,"#dfebbd","#707560"],[651.500,426.300,67.300,10.700,"#76a6b7","#3b5359"],[804.400,562.700,28.300,3.200,"#ee9573","#7c4a38"],[948.300,534.200,24,3,"#e98065","#743f31"],[715.300,495.600,81,13,"#2c7bb8","#173c5a"],[837.600,481.300,46.700,7.300,"#f4f8bf","#787b60"],[600.200,660,50,8,"#dfebbd","#707560"]];
/* solid edges: x1 y1 x2 y2 width [colour] */
const EDGES=`683 343 735 366 2.6 #707560|835 436 848 420 3 #707560|662 598 640 622 3 #707560
562 459 600 465 1.2|562 459 590 452 1|605 356 607 382 1.2|672 352 700 368 1|672 352 760 375 1
715 405 928 367 1.1|755 390 886 371 .9|755 400 886 378 1.2|755 410 890 380 1|715 412 928 369 1.2|738 414 855 397 1|700 410 880 383 .9
834 355 797 415 1.3|834 355 801 413 1|834 355 806 405 1
928 367 882 470 2.6|903 412 884 464 2|903 402 884 464 1.2|889 380 899 500 1.4
903 485 908 555 1.4|908 555 917 600 1.2|853 523 804 645 3|838 563 956 698 1.1|852 526 925 532 1.1|891 569 785 640 1.3|891 569 795 655 1.2|813 500 905 418 .9|765 380 815 410 1
623 490 633 546 1.5|624 485 646 540 1.5|642 620 698 613 1.2|650 626 680 580 1.2|650 657 765 668 1.1|705 682 790 670 1.2|738 659 790 636 1.2|716 590 735 600 1|660 560 638 590 1.2|672 590 700 570 1|745 575 770 620 1|795 521 850 525 .9|848 410 903 425 1|893 448 950 443 1`.split(/\||\n/).map(s=>s.trim().split(" "));
const SHADES=[[24,"#d7191c","#6b0c0e"],[29,"#d92322","#6c1111"],[34,"#dc2e2a","#6d1715"],[40,"#df3a33","#6f1d19"],[46,"#e0463c","#70231e"],[51,"#e15245","#702922"],[57,"#e35f4e","#712f27"],[62,"#e66b57","#73352b"],[99,"#e7755d","#743a2e"]];
define("graph-canvas",`:host{display:block;background:#fff;overflow:hidden}svg{display:block}`,()=>{
  const nodes=[];
  TILES.forEach(t=>t.n.split(" ").forEach(p=>{const[a,b,r]=p.split(",").map(Number);nodes.push([t.x+a/3+.1,t.y+b/3+.1,r/3])}));
  let seed=41;const rnd=()=>(seed=(seed*16807)%2147483647)/2147483647;
  let thin="";
  const pool=nodes.filter(n=>n[0]>690&&n[1]>285);
  let k=0;while(k<125){const a=pool[rnd()*pool.length|0],b=pool[rnd()*pool.length|0];const d=Math.hypot(a[0]-b[0],a[1]-b[1]);
    const mx=(a[0]+b[0])/2,my=(a[1]+b[1])/2;
    if(d<40||d>190||(mx>850&&my>580)||my<370||(my>650&&rnd()<.7))continue;thin+=`M${a[0].toFixed(1)} ${a[1].toFixed(1)}L${b[0].toFixed(1)} ${b[1].toFixed(1)}`;k++}
  /* bundle fanning out below the central hub */
  for(let i=0;i<26;i++){thin+=`M${690+rnd()*110|0} ${560+rnd()*15|0}L${660+rnd()*150|0} ${625+rnd()*40|0}`}
  thin+="M560 383L598 387M558 569L610 552M558 569L600 572M593 510L632 514M597 521L645 552M561 569L586 558M707 297L698 340M748 313L728 352M903 304L882 352M903 304L870 400M903 304L878 340M741 346L790 341M681 330L710 345M578 424L590 440M959 309L950 360M572 599L590 588M925 377L933 410M940 380L949 420M938 520L920 470M950 480L956 515M768 673L850 640M790 690L800 668";
  const circ=(x,y,r)=>{const s=SHADES.find(q=>r*3<q[0]),w=r<10?1.2:r<15?1.6:2.1;return `<circle cx="${x.toFixed(1)}" cy="${y.toFixed(1)}" r="${(r+.25-w/2).toFixed(2)}" fill="${s[1]}" stroke="${s[2]}" stroke-width="${w}"/>`};
  return `<svg width="762" height="724" viewBox="369 152 762 724"><path d="${thin}" stroke="#7d1c20" stroke-width=".6" stroke-dasharray="2.500 1.200" fill="none" opacity=".68"/>`
   +EDGES.map(e=>`<path d="M${e[0]} ${e[1]}L${e[2]} ${e[3]}" stroke="${e[5]||"#6b1214"}" stroke-width="${e[4]}"/>`).join("")
   +BEHIND.map(n=>circ(...n)).join("")
   +HUBS.map(h=>`<circle cx="${h[0]}" cy="${h[1]}" r="${h[2]-h[3]/2}" fill="${h[4]}" stroke="${h[5]}" stroke-width="${h[3]}"/>`).join("")
   +nodes.map(n=>circ(...n)).join("")+`</svg>`});

define("tool-strip",`:host{display:flex;flex-direction:column;width:34px;flex:none;align-items:center}
.logo{background:#fff;width:34px;height:28px;display:flex;align-items:center;justify-content:center}
.sep{width:26px;border-top:1px dashed #aaa;margin:5px 0}
.b{margin-top:auto;align-self:flex-start;margin-left:2px;margin-bottom:15px}
.b push-button{width:28px;height:20px;font-size:9px}`,
 `<div class="logo"><g-icon n="logo" s="26"></g-icon></div>`+["arrow","marquee","hand"].map(n=>`<tool-toggle ${n=="hand"?"on":""}><g-icon n="${n}"></g-icon></tool-toggle>`).join("")
 +`<span class="sep"></span>`+["brush","diamond","bucket","pencil","pencil","plane","sun","helpCursor","ring","ringE"].map(n=>`<tool-toggle><g-icon n="${n}"></g-icon></tool-toggle>`).join("")
 +`<div class="b">`+["mag","square","size","Apink","Ashade","Awidth"].map(n=>`<push-button>${n=="size"?`<t-x up w="14">size</t-x>`:`<g-icon n="${n}"></g-icon>`}</push-button>`).join("")+`</div>`);

define("graph-view",`:host{display:flex;flex-direction:column;flex:1}
.top{display:flex;flex:1}
.main{display:flex;flex-direction:column;flex:1}
.msg{display:flex;height:28px;align-items:center;padding-left:8px}
.h{margin-left:auto;background:#fff;width:95px;height:28px;display:flex;align-items:center;padding-left:11px;gap:5px}
.bot{display:flex;height:36px;align-items:center;flex:none;padding:0 9px 2px 5px}
.sep{height:26px;border-left:1px dashed #aaa;flex:none}
push-button{height:20px}`,
`<div class="top"><tool-strip></tool-strip><div class="main"><div class="msg"><t-x up w="44">Dragging</t-x><div class="h"><g-icon n="bulb" s="15"></g-icon><t-x up w="52">Hierarchy</t-x></div></div><graph-canvas></graph-canvas></div></div>
<div class="bot"><span class="sep"></span><push-button style="width:29px;margin-left:5px;--bulb:#fbf3a6;--bulbline:#b8a76a"><g-icon n="bulb" s="17"></g-icon></push-button><push-button style="width:39px;margin-left:-1px;gap:5px"><g-icon n="camera"></g-icon><g-icon n="down" s="7"></g-icon></push-button>
<span class="sep" style="margin-left:5px"></span><g-icon n="T" style="margin-left:12px"></g-icon><tool-toggle on style="margin-left:7px"><g-icon n="hull"></g-icon></tool-toggle><span class="sep" style="margin-left:5px"></span><tool-toggle on style="margin-left:5px"><g-icon n="edge"></g-icon></tool-toggle><tool-toggle on><g-icon n="rainbow"></g-icon></tool-toggle><g-icon n="Tout" style="margin-left:7px"></g-icon>
<slider-bar a="7" style="width:73px;margin-left:21px"></slider-bar><span class="sep" style="margin-left:18px"></span><push-button style="width:29px;margin-left:5px"><g-icon n="Adot"></g-icon></push-button><push-button style="width:28px;margin-left:-1px"><g-icon n="Ablue"></g-icon></push-button><push-button style="width:102px"><t-x up w="90">Arial-BoldMT, 32</t-x></push-button>
<slider-bar a="29" style="width:73px;margin-left:14px"></slider-bar><span style="width:16px;height:16px;background:#000;margin-left:13px"></span><push-button style="width:28px"><g-icon n="clip"></g-icon></push-button><g-icon n="eject" s="11" style="margin-left:auto"></g-icon></div>`);

/* ---------- context and statistics ---------- */
define("context-view",`:host{display:flex;justify-content:space-between;padding:4px 11px 0 7px;font-size:13px;line-height:22px}div{display:flex;gap:9px}g-icon{margin-top:4px}`,
`<section><div><b><t-x w="45">Nodes:</t-x></b><t-x w="24">362</t-x></div><div><b><t-x w="45">Edges:</t-x></b><t-x w="24">176</t-x></div><div><t-x w="109">Undirected Graph</t-x></div></section><g-icon n="pie" s="17"></g-icon>`);

define("stat-section",`:host{display:flex;flex-direction:column}
h3{margin:0;height:20px;background:#f8f8f8;border:solid #d7e2f2;border-width:1px 0;display:flex;align-items:center;gap:4px;padding-left:5px;font-size:13px;line-height:18px}
.l{display:flex;flex-direction:column;gap:8px;margin:2px 0 6px}`,
h=>`<h3><g-icon n="twisty" s="10"></g-icon><t-x w="${h.getAttribute("w")}">${h.getAttribute("label")}</t-x></h3><div class="l"><slot></slot></div>`);
define("stat-row",`:host{display:flex;height:20px;align-items:center;padding:0 4px 0 4px;font-size:13px}
t-x.v{margin-left:auto;margin-right:7px}push-button{height:20px;font-size:12px}`,
h=>{const v=h.getAttribute("v"),off=h.hasAttribute("off");return `<slot></slot><t-x class="v" w="${v?h.getAttribute("vw"):0}">${v||""}</t-x><push-button style="width:33px"><t-x up w="21">Run</t-x></push-button><push-button style="width:28px" ${off?"off":""}><g-icon n="${off?"helpOff":"help"}" s="10"></g-icon></push-button>`});

const STATS=[["Network Overview",124,[["Average Degree",98,"0.972",36],["Avg. Weighted Degree",138,"1.293",36],["Network Diameter",114,"7",8],["Graph Density",89,"0.003",36],["HITS",29," ",0],["Modularity",67,"0.956",36],["PageRank",59," ",0],["Connected Components",150,"245",24]]],
["Node Overview",103,[["Avg. Clustering Coefficient",170],["SW Type Statistics",113],["Eigenvector Centrality",138],["Lineage",48]]],
["Edge Overview",102,[["Avg. Path Length",106,"2.224",36],["Link Communities",114]]],
["Dynamic",59,[["# Nodes",51],["# Edges",48],["Degree",44],["Clustering Coefficient",138]]]];
define("stats-view",`:host{display:flex;flex-direction:column;flex:1;background:#fff}
.s{background:#e8e8e8;height:19px;border-bottom:1px solid #7b8a9c;display:flex}
.g{height:10px}`,
`<div class="s"><push-button style="width:55px;height:18px"><t-x up w="43">Settings</t-x></push-button></div><div class="g"></div>`
+STATS.map(s=>`<stat-section label="${s[0]}" w="${s[1]}">${s[2].map(r=>{const help=r.length>2;return `<stat-row ${help?`v="${r[2]}" vw="${r[3]}"`:"off"}><t-x w="${r[1]}">${r[0]}</t-x></stat-row>`}).join("")}</stat-section>`).join(""));

/* ---------- timeline ---------- */
define("time-line",`:host{display:flex;height:68px;background:#e8e8e8;flex:none}
.b{display:flex;flex-direction:column;width:28px}.b push-button{height:20px}
.track{display:flex;width:1264px;height:67px;margin:1px 0 0 5px;border:1px solid #000;background:linear-gradient(#d4dbe4,#c7d0d7);overflow:hidden}
.y{width:63.100px;flex:none;border-right:1px solid #aab3bb;white-space:nowrap;font:29px/77px "Liberation Sans",Arial,sans-serif;color:#a7b1b7;text-indent:4px}
.e{flex:1;background:#d2d2d2;display:flex;justify-content:center;padding:3px 1px 0 0}`,
`<div class="b"><push-button><g-icon n="redx" s="14"></g-icon></push-button><push-button><g-icon n="chart"></g-icon></push-button><push-button><g-icon n="gear" s="11"></g-icon></push-button></div>
<push-button round style="width:43px;height:41px;margin:13px 0 0 4px"><g-icon n="bigplay" s="22"></g-icon></push-button>
<div class="track">${Array.from({length:20},(_,i)=>`<span class="y">${1994+i}</span>`).join("")}</div><div class="e"><g-icon n="close" s="13"></g-icon></div>`);

define("app-banner",`:host{display:flex;height:46px;margin-bottom:-1px;flex:none;border-bottom:1px solid #444;background:linear-gradient(90deg,rgba(255,255,255,.1),#fff 310px),repeating-linear-gradient(135deg,#fff 0 6.500px,#e2e2e2 6.500px 7.300px);padding-left:13px;gap:21px}
div{display:flex;align-items:center;width:160px;height:21px;margin-top:13px;border:1px solid #333;background:linear-gradient(#d6d6ca,#c6c6c4 40%,#bcbcbc);padding:0 20px 0 5px}
div:first-of-type{background:linear-gradient(#fff,#e9e9e9)}
div t-x{margin:0 auto}
svg{margin-left:auto;margin-right:9px}`,
`<div><g-icon n="globe"></g-icon><t-x up w="50">Overview</t-x></div><div><g-icon n="table"></g-icon><t-x up w="86">Data Laboratory</t-x></div><div><g-icon n="monitor"></g-icon><t-x up w="42">Preview</t-x></div>
<svg width="142" height="45" viewBox="728 72 426 135"><g fill="none" stroke="#050808" stroke-width="7"><path d="M733 68C745 112 770 141 812 141 868 141 905 98 938 68M755 212C756 185 778 169 802 169 830 169 848 188 856 212M957 68C968 102 1020 106 1046 68M1098 72L1068 92"/></g><g fill="#050808"><path d="M850 68L882 68C858 118 866 190 906 190 950 187 988 110 1048 102 1010 126 1000 165 1000 210L956 210C965 180 975 155 988 142 958 172 930 195 900 195 845 188 832 130 850 68z"/><path d="M1040 210C1044 150 1058 98 1106 99 1150 101 1150 160 1140 210L1110 210C1120 170 1124 121 1103 121 1078 121 1062 160 1060 210z"/></g></svg>`);

define("gephi-app",`:host{display:flex;width:1425px;height:1088px;margin-left:53px;padding:31px 0 0 3px;overflow:hidden}
.win{display:flex;flex-direction:column;width:1366px;height:977px;border-radius:5px 5px 0 0;overflow:hidden;background:#777}
.sh{height:977px;border-radius:5px 5px 0 0;box-shadow:0 22px 40px rgba(0,0,0,.58),0 0 2px rgba(0,0,0,.35)}
.title{display:flex;height:23px;align-items:center;background:linear-gradient(#ececec,#d1d1d1);padding-left:8px;gap:8px;color:#444;flex:none;border-top:1px solid #f8f8f8}
.title i{width:12px;height:12px;border-radius:50%;background:#8d8d90;border:1px solid #7a7a7c}
.title t-x{margin-left:545px;font-size:13px}
.work{display:flex;gap:3px;padding:4px 3px 3px;height:816px;flex:none}
.col{display:flex;flex-direction:column;gap:3px}
.nav{display:flex;height:15px;color:#666;margin:-4px -1px 0 0}
.nav span{display:flex;align-items:center;justify-content:center;width:26px;border:1px solid #868686;background:linear-gradient(#a8a8a8,#939393);margin-left:-1px}
.status{display:flex;flex:1;align-items:center;background:#d3d3d3;border-top:1px solid #444;box-shadow:inset 0 1px #aaa;justify-content:flex-end;padding-right:29px}
.status push-button{width:22px;height:13px;color:#8a8a8a}`,
`<div class="sh"><div class="win"><div class="title"><i></i><i></i><i></i><t-x w="139">Gephi 0.8.2 - Project 1</t-x></div><app-banner></app-banner>
<div class="work">
 <div class="col" style="width:273px">
  <dock-panel style="height:392px"><dock-tab slot="tab" style="width:74px;padding-left:14px"><t-x up w="45">Partition</t-x></dock-tab><dock-tab slot="tab" on hot x style="width:71px;padding-left:5px"><t-x up w="43">Ranking</t-x></dock-tab><ranking-view></ranking-view></dock-panel>
  <dock-panel style="flex:1"><dock-tab slot="tab" on x style="width:65px"><t-x up w="36">Layout</t-x></dock-tab><dock-tab slot="tab" style="width:82px;padding-left:13px"><t-x up w="54">Streaming</t-x></dock-tab><layout-view></layout-view></dock-panel>
 </div>
 <dock-panel plain style="width:796px"><dock-tab slot="tab" on x style="width:70px;padding-left:8px"><t-x up w="33" style="margin-right:6px">Graph</t-x></dock-tab><dock-tab slot="tab" x style="width:160px;padding-left:3px"><g-icon n="cube" style="margin-right:4px"></g-icon><t-x up w="113">Semantic Web Import</t-x></dock-tab>
  <div slot="end" class="nav"><span><g-icon n="left" s="8"></g-icon></span><span><g-icon n="right" s="8"></g-icon></span><span style="width:20px;margin:0 0 0 4px"><g-icon n="down" s="8"></g-icon></span></div><graph-view></graph-view></dock-panel>
 <div class="col" style="width:285px">
  <dock-panel style="height:92px"><dock-tab slot="tab" on x style="width:72px"><t-x up w="43">Context</t-x></dock-tab><context-view></context-view></dock-panel>
  <dock-panel style="flex:1"><dock-tab slot="tab" on x style="width:77px"><t-x up w="48">Statistics</t-x></dock-tab><dock-tab slot="tab" style="width:61px;padding-left:13px"><t-x up w="33">Filters</t-x></dock-tab><stats-view></stats-view></dock-panel>
 </div>
</div>
<time-line></time-line>
<div class="status"><g-icon n="page" s="15" style="margin-right:8px"></g-icon><t-x up w="62" style="margin-right:7px">Workspace 0</t-x><push-button><g-icon n="left" s="9"></g-icon></push-button><push-button style="margin-left:-1px"><g-icon n="right" s="9"></g-icon></push-button></div>
</div></div>`);
</script>
</body>
</html>
